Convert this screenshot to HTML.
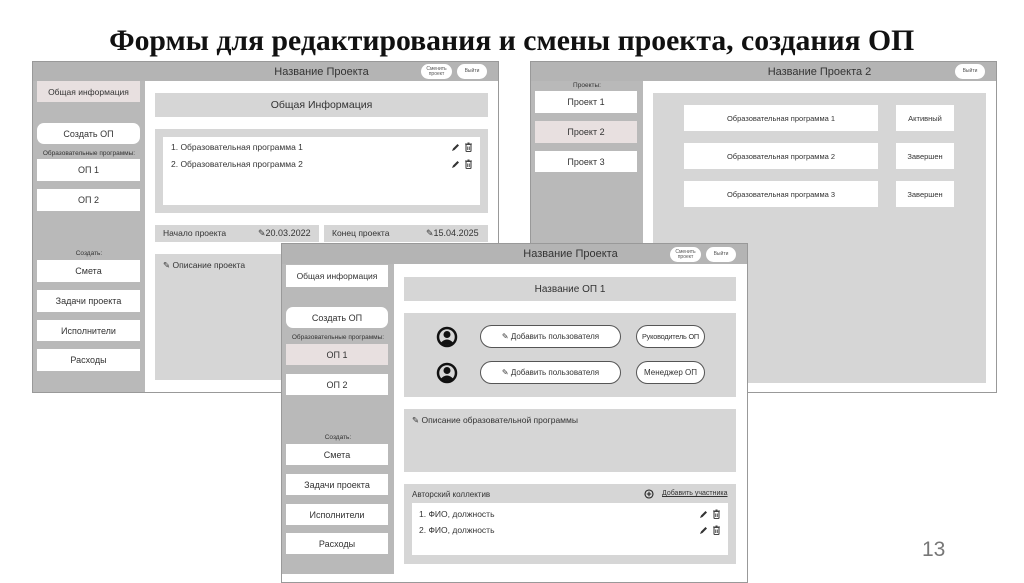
<!DOCTYPE html>
<html><head><meta charset="utf-8"><style>
*{margin:0;padding:0;box-sizing:border-box}
body{width:1024px;height:574px;background:#fff;position:relative;overflow:hidden;font-family:"Liberation Sans",sans-serif;color:#333}
.a{position:absolute}
.t{display:flex;align-items:center;justify-content:center;text-align:center}
.win{position:absolute;background:#fff;border:1px solid #999}
.hdr{background:#b4b4b4}
.side{background:#b9b9b9}
.b{background:#fff;font-size:9px;color:#333}
.pk{background:#e8e0e0}
.g{background:#d6d6d6}
.pill{background:#fff;border:1px solid #555;border-radius:12px;font-size:8px}
.sm{background:#fff;border-radius:8px;font-size:5px;line-height:5px;color:#555}
.lbl{font-size:6.5px;color:#333;text-align:center}
.ic{position:absolute;width:24px;height:10px}
</style></head><body>
<svg width="0" height="0" style="position:absolute"><defs>
<symbol id="ed" viewBox="0 0 24 10"><path d="M2 9 L3 6.5 L7.5 2 L9 3.5 L4.5 8Z" fill="#333"/><rect x="16" y="2.5" width="5" height="7" rx="0.8" fill="none" stroke="#444" stroke-width="1.1"/><path d="M15 2 H22 M17.5 1 H19.5 M17.7 4.5 V8 M19.3 4.5 V8" stroke="#444" stroke-width="0.9"/></symbol>
</defs></svg>
<div class="a" style="left:0;top:24px;width:1024px;text-align:center;font-family:'Liberation Serif',serif;font-weight:bold;font-size:30px;color:#111;line-height:34px"><span style="display:inline-block;transform:scaleX(0.99)">Формы для редактирования и смены проекта, создания ОП</span></div>

<!-- Left window -->
<div class="win" style="left:32px;top:61px;width:467px;height:332px"></div>
<div class="a hdr" style="left:33px;top:62px;width:465px;height:19px"></div>
<div class="a t" style="left:145px;top:62px;width:353px;height:19px;font-size:11px">Название Проекта</div>
<div class="a t sm" style="left:421px;top:64px;width:31px;height:15px">Сменить<br>проект</div>
<div class="a t sm" style="left:457px;top:64px;width:30px;height:15px">Выйти</div>
<div class="a side" style="left:33px;top:81px;width:112px;height:311px"></div>
<div class="a t pk" style="left:37px;top:81px;width:103px;height:21px;font-size:8.5px">Общая информация</div>
<div class="a t b" style="left:37px;top:123px;width:103px;height:21px;border-radius:7px">Создать ОП</div>
<div class="a lbl" style="left:33px;top:150px;width:112px">Образовательные программы:</div>
<div class="a t b" style="left:37px;top:159px;width:103px;height:22px">ОП 1</div>
<div class="a t b" style="left:37px;top:189px;width:103px;height:22px">ОП 2</div>
<div class="a lbl" style="left:33px;top:250px;width:112px">Создать:</div>
<div class="a t b" style="left:37px;top:260px;width:103px;height:22px">Смета</div>
<div class="a t b" style="left:37px;top:290px;width:103px;height:22px">Задачи проекта</div>
<div class="a t b" style="left:37px;top:320px;width:103px;height:21px">Исполнители</div>
<div class="a t b" style="left:37px;top:349px;width:103px;height:22px">Расходы</div>
<div class="a t g" style="left:155px;top:93px;width:333px;height:24px;font-size:10.5px">Общая Информация</div>
<div class="a g" style="left:155px;top:129px;width:333px;height:84px"></div>
<div class="a" style="left:163px;top:137px;width:317px;height:68px;background:#fff"></div>
<div class="a" style="left:171px;top:142px;font-size:8.5px">1. Образовательная программа 1</div>
<div class="a" style="left:171px;top:159px;font-size:8.5px">2. Образовательная программа 2</div>
<svg class="ic" style="left:450px;top:142px"><use href="#ed"/></svg>
<svg class="ic" style="left:450px;top:159px"><use href="#ed"/></svg>
<div class="a g" style="left:155px;top:225px;width:164px;height:17px"></div>
<div class="a g" style="left:324px;top:225px;width:164px;height:17px"></div>
<div class="a" style="left:163px;top:228px;font-size:8.5px">Начало проекта</div>
<div class="a" style="left:258px;top:228px;font-size:9px">✎20.03.2022</div>
<div class="a" style="left:332px;top:228px;font-size:8.5px">Конец проекта</div>
<div class="a" style="left:426px;top:228px;font-size:9px">✎15.04.2025</div>
<div class="a g" style="left:155px;top:254px;width:333px;height:126px"></div>
<div class="a" style="left:163px;top:260px;font-size:8.5px">✎ Описание проекта</div>

<!-- Right window -->
<div class="win" style="left:530px;top:61px;width:467px;height:332px"></div>
<div class="a hdr" style="left:531px;top:62px;width:465px;height:19px"></div>
<div class="a t" style="left:643px;top:62px;width:353px;height:19px;font-size:11px">Название Проекта 2</div>
<div class="a t sm" style="left:955px;top:64px;width:30px;height:15px">Выйти</div>
<div class="a side" style="left:531px;top:81px;width:112px;height:311px"></div>
<div class="a lbl" style="left:531px;top:82px;width:112px">Проекты:</div>
<div class="a t b" style="left:535px;top:91px;width:102px;height:22px">Проект 1</div>
<div class="a t pk" style="left:535px;top:121px;width:102px;height:22px;font-size:9px">Проект 2</div>
<div class="a t b" style="left:535px;top:151px;width:102px;height:21px">Проект 3</div>
<div class="a g" style="left:653px;top:93px;width:333px;height:290px"></div>
<div class="a t b" style="left:684px;top:105px;width:194px;height:26px;font-size:7.5px">Образовательная программа 1</div>
<div class="a t b" style="left:896px;top:105px;width:58px;height:26px;font-size:7.5px">Активный</div>
<div class="a t b" style="left:684px;top:143px;width:194px;height:26px;font-size:7.5px">Образовательная программа 2</div>
<div class="a t b" style="left:896px;top:143px;width:58px;height:26px;font-size:7.5px">Завершен</div>
<div class="a t b" style="left:684px;top:181px;width:194px;height:26px;font-size:7.5px">Образовательная программа 3</div>
<div class="a t b" style="left:896px;top:181px;width:58px;height:26px;font-size:7.5px">Завершен</div>

<!-- Front window -->
<div class="win" style="left:281px;top:243px;width:467px;height:340px"></div>
<div class="a hdr" style="left:282px;top:244px;width:465px;height:20px"></div>
<div class="a t" style="left:394px;top:244px;width:353px;height:20px;font-size:11px">Название Проекта</div>
<div class="a t sm" style="left:670px;top:247px;width:31px;height:15px">Сменить<br>проект</div>
<div class="a t sm" style="left:706px;top:247px;width:30px;height:15px">Выйти</div>
<div class="a side" style="left:282px;top:264px;width:112px;height:310px"></div>
<div class="a t b" style="left:286px;top:265px;width:102px;height:22px;font-size:8.5px">Общая информация</div>
<div class="a t b" style="left:286px;top:307px;width:102px;height:21px;border-radius:7px">Создать ОП</div>
<div class="a lbl" style="left:282px;top:334px;width:112px">Образовательные программы:</div>
<div class="a t pk" style="left:286px;top:344px;width:102px;height:21px;font-size:9px">ОП 1</div>
<div class="a t b" style="left:286px;top:374px;width:102px;height:21px">ОП 2</div>
<div class="a lbl" style="left:282px;top:434px;width:112px">Создать:</div>
<div class="a t b" style="left:286px;top:444px;width:102px;height:21px">Смета</div>
<div class="a t b" style="left:286px;top:474px;width:102px;height:21px">Задачи проекта</div>
<div class="a t b" style="left:286px;top:504px;width:102px;height:21px">Исполнители</div>
<div class="a t b" style="left:286px;top:533px;width:102px;height:21px">Расходы</div>
<div class="a t g" style="left:404px;top:277px;width:332px;height:24px;font-size:10px">Название ОП 1</div>
<div class="a g" style="left:404px;top:313px;width:332px;height:84px"></div>
<svg class="a" style="left:436px;top:326px" width="22" height="22" viewBox="0 0 22 22"><circle cx="11" cy="11" r="9" fill="none" stroke="#111" stroke-width="2.5"/><circle cx="11" cy="8.5" r="3.5" fill="#111"/><path d="M4.5 17 Q11 10 17.5 17 Q11 21 4.5 17Z" fill="#111"/></svg>
<svg class="a" style="left:436px;top:362px" width="22" height="22" viewBox="0 0 22 22"><circle cx="11" cy="11" r="9" fill="none" stroke="#111" stroke-width="2.5"/><circle cx="11" cy="8.5" r="3.5" fill="#111"/><path d="M4.5 17 Q11 10 17.5 17 Q11 21 4.5 17Z" fill="#111"/></svg>
<div class="a t pill" style="left:480px;top:325px;width:141px;height:23px">✎ Добавить пользователя</div>
<div class="a t pill" style="left:636px;top:325px;width:69px;height:23px;font-size:7.3px;letter-spacing:-0.2px">Руководитель ОП</div>
<div class="a t pill" style="left:480px;top:361px;width:141px;height:23px">✎ Добавить пользователя</div>
<div class="a t pill" style="left:636px;top:361px;width:69px;height:23px">Менеджер ОП</div>
<div class="a g" style="left:404px;top:409px;width:332px;height:63px"></div>
<div class="a" style="left:412px;top:415px;font-size:8.5px">✎ Описание образовательной программы</div>
<div class="a g" style="left:404px;top:484px;width:332px;height:80px"></div>
<div class="a" style="left:412px;top:490px;font-size:8px">Авторский коллектив</div>
<svg class="a" style="left:644px;top:489px" width="10" height="10" viewBox="0 0 10 10"><circle cx="5" cy="5" r="4" fill="none" stroke="#222" stroke-width="1.1"/><path d="M5 2.8V7.2M2.8 5H7.2" stroke="#222" stroke-width="1.1"/></svg>
<div class="a" style="left:662px;top:490px;font-size:7px;text-decoration:underline">Добавить участника</div>
<div class="a" style="left:412px;top:503px;width:316px;height:52px;background:#fff"></div>
<div class="a" style="left:419px;top:509px;font-size:8.5px">1. ФИО, должность</div>
<div class="a" style="left:419px;top:525px;font-size:8.5px">2. ФИО, должность</div>
<svg class="ic" style="left:698px;top:509px"><use href="#ed"/></svg>
<svg class="ic" style="left:698px;top:525px"><use href="#ed"/></svg>

<div class="a" style="left:922px;top:538px;font-size:21px;color:#777">13</div>
</body></html>
